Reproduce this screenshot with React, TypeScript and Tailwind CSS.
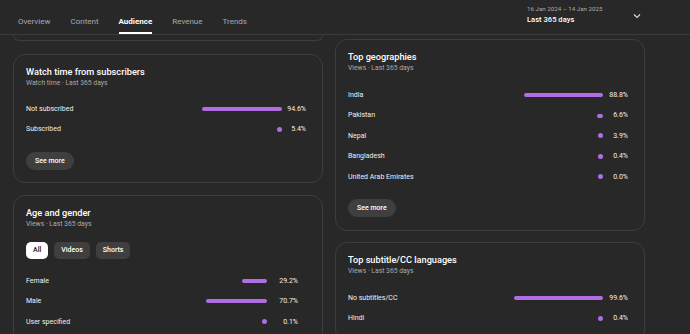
import React from "react";

const tabs = ["Overview", "Content", "Audience", "Revenue", "Trends"];

interface RowItem {
  label: string;
  pct: number;
}

function Bar({ pct, full }: { pct: number; full: number }) {
  const w = Math.max(5, (pct / 100) * full);
  const isDot = pct < 6;
  return (
    <div className="flex justify-end items-center" style={{ width: full }}>
      <div
        className={`rounded-full bg-[#b06de6] ${isDot ? "h-[5px]" : "h-[4px]"}`}
        style={{ width: w }}
      />
    </div>
  );
}

function Rows({ rows, full, valueW }: { rows: RowItem[]; full: number; valueW: number }) {
  return (
    <div className="flex flex-col">
      {rows.map((r) => (
        <div key={r.label} className="flex items-center h-[20.4px] text-[7px] text-[#f1f1f1]">
          <span className="flex-1">{r.label}</span>
          <Bar pct={r.pct} full={full} />
          <span className="text-right" style={{ width: valueW }}>
            {r.pct.toFixed(1)}%
          </span>
        </div>
      ))}
    </div>
  );
}

function SeeMore({ className = "" }: { className?: string }) {
  return (
    <div className={`flex ${className}`}>
      <button className="h-[18px] px-[9px] rounded-full bg-[#3f3f3f] text-[7px] leading-[18px] font-medium text-white">
        See more
      </button>
    </div>
  );
}

function Card({
  title,
  subtitle,
  children,
  className = "",
}: {
  title: string;
  subtitle: string;
  children: React.ReactNode;
  className?: string;
}) {
  return (
    <div className={`border border-[#3d3d3d] rounded-[12px] pl-[12px] pt-[10px] ${className}`}>
      <div className="text-[9.2px] leading-[13px] font-medium text-white">{title}</div>
      <div className="text-[6.8px] leading-[11px] text-[#aaaaaa]">{subtitle}</div>
      {children}
    </div>
  );
}

export default function App() {
  return (
    <div className="w-[690px] h-[334px] overflow-hidden bg-[#282828] font-['Roboto',sans-serif]">
      <header className="h-[35px] border-b border-[#3a3a3a] flex justify-between">
        <nav className="flex gap-[20px] pl-[18px] h-full">
          {tabs.map((t) => {
            const active = t === "Audience";
            return (
              <div key={t} className="flex flex-col justify-end h-full">
                <span
                  className={`text-[8px] leading-[12px] ${active ? "font-bold text-white" : "text-[#aaaaaa]"}`}
                >
                  {t}
                </span>
                <div className={`mt-[4px] h-[2px] ${active ? "bg-white" : "bg-transparent"}`} />
              </div>
            );
          })}
        </nav>
        <div className="flex items-start pr-[49px] pt-[5px]">
          <div className="w-[106px]">
            <div className="text-[6.2px] leading-[8px] text-[#aaaaaa]">16 Jan 2024 – 14 Jan 2025</div>
            <div className="text-[7.6px] leading-[14px] font-medium text-white">Last 365 days</div>
          </div>
          <svg className="mt-[8px]" width="8" height="6" viewBox="0 0 8 6" fill="none">
            <path d="M1 1.5 L4 4.5 L7 1.5" stroke="#dddddd" strokeWidth="1.1" />
          </svg>
        </div>
      </header>

      <main className="flex gap-[12px] pl-[13px]">
        <div className="w-[310px] flex flex-col">
          <div className="h-[6px] border border-t-0 border-[#3d3d3d] rounded-b-[12px]" />
          <Card
            className="mt-[13px] pr-[16px] pb-[12px]"
            title="Watch time from subscribers"
            subtitle="Watch time · Last 365 days"
          >
            <div className="mt-[10px]">
              <Rows
                full={85}
                valueW={24}
                rows={[
                  { label: "Not subscribed", pct: 94.6 },
                  { label: "Subscribed", pct: 5.4 },
                ]}
              />
            </div>
            <SeeMore className="mt-[12px]" />
          </Card>
          <Card className="mt-[12px] pr-[24px] pb-[12px]" title="Age and gender" subtitle="Views · Last 365 days">
            <div className="flex gap-[6px] mt-[12px]">
              <span className="h-[17px] px-[7px] flex items-center rounded-[5px] bg-white text-[7px] font-medium text-[#0f0f0f]">
                All
              </span>
              <span className="h-[17px] px-[7px] flex items-center rounded-[5px] bg-[#3f3f3f] text-[7px] font-medium text-white">
                Videos
              </span>
              <span className="h-[17px] px-[7px] flex items-center rounded-[5px] bg-[#3f3f3f] text-[7px] font-medium text-white">
                Shorts
              </span>
            </div>
            <div className="mt-[12px]">
              <Rows
                full={86}
                valueW={31}
                rows={[
                  { label: "Female", pct: 29.2 },
                  { label: "Male", pct: 70.7 },
                  { label: "User specified", pct: 0.1 },
                ]}
              />
            </div>
          </Card>
        </div>

        <div className="w-[310px] flex flex-col pt-[4px]">
          <Card className="pr-[16px] pb-[13px]" title="Top geographies" subtitle="Views · Last 365 days">
            <div className="mt-[11px]">
              <Rows
                full={89}
                valueW={25}
                rows={[
                  { label: "India", pct: 88.8 },
                  { label: "Pakistan", pct: 6.6 },
                  { label: "Nepal", pct: 3.9 },
                  { label: "Bangladesh", pct: 0.4 },
                  { label: "United Arab Emirates", pct: 0.0 },
                ]}
              />
            </div>
            <SeeMore className="mt-[12px]" />
          </Card>
          <Card className="mt-[11px] pr-[16px] pb-[12px]" title="Top subtitle/CC languages" subtitle="Views · Last 365 days">
            <div className="mt-[11px]">
              <Rows
                full={89}
                valueW={25}
                rows={[
                  { label: "No subtitles/CC", pct: 99.6 },
                  { label: "Hindi", pct: 0.4 },
                ]}
              />
            </div>
          </Card>
        </div>
      </main>
    </div>
  );
}
